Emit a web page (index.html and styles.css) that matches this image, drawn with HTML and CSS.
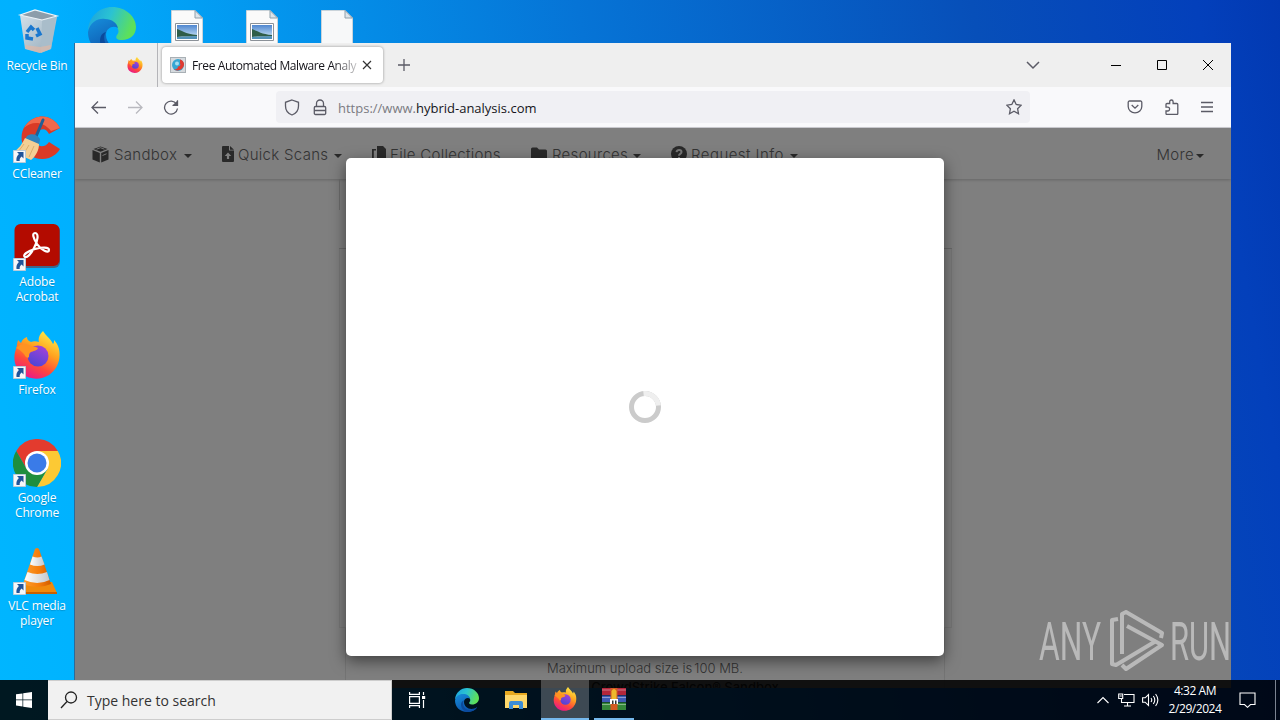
FILE: index.html
```html
<!DOCTYPE html>
<html lang="en">
<head>
  <meta charset="UTF-8" />
  <title>Desktop</title>
  <link rel="stylesheet" href="styles.css">
</head>
<body>

<!-- shared icons -->
<svg class="defs" width="0" height="0">
  <defs>
    <linearGradient id="ffOuter" x1=".8" y1="0" x2=".3" y2="1">
      <stop offset="0" stop-color="#fff14a"/><stop offset=".4" stop-color="#ffa21f"/><stop offset=".7" stop-color="#ff4a3a"/><stop offset="1" stop-color="#e8168c"/>
    </linearGradient>
    <linearGradient id="ffGlobe" x1=".8" y1="0" x2=".3" y2="1">
      <stop offset="0" stop-color="#a641d8"/><stop offset="1" stop-color="#4b45d4"/>
    </linearGradient>
    <linearGradient id="edgeGreen" x1="0" y1="0" x2="1" y2=".3">
      <stop offset="0" stop-color="#1a9fe0"/><stop offset=".5" stop-color="#2bc3d2"/><stop offset="1" stop-color="#5de05a"/>
    </linearGradient>
    <linearGradient id="edgeBlue" x1="0" y1="0" x2=".6" y2="1">
      <stop offset="0" stop-color="#168fdc"/><stop offset="1" stop-color="#0c4fa8"/>
    </linearGradient>
    <linearGradient id="binSide" x1="0" y1="0" x2="1" y2="1">
      <stop offset="0" stop-color="#d3e0e9"/><stop offset="1" stop-color="#94aab9"/>
    </linearGradient>
    <linearGradient id="cone" x1="0" y1="0" x2="1" y2="0">
      <stop offset="0" stop-color="#ffa02e"/><stop offset=".6" stop-color="#f47b0a"/><stop offset="1" stop-color="#cf5c00"/>
    </linearGradient>
    <linearGradient id="coneWhite" x1="0" y1="0" x2="1" y2="0">
      <stop offset="0" stop-color="#fff"/><stop offset="1" stop-color="#c5c8cc"/>
    </linearGradient>
    <linearGradient id="sky" x1="0" y1="0" x2="0" y2="1">
      <stop offset="0" stop-color="#4f86d0"/><stop offset="1" stop-color="#d9effa"/>
    </linearGradient>

    <symbol id="firefox" viewBox="0 0 48 48">
      <path fill="url(#ffOuter)" d="M30 0c-4 4-5 8-4 11-3-1-6-1-8 0-3-1-4-3-4-5-3 1-5 3-6 6L5 9c-1 3-1 6-2 9-4 11 0 20 6 25 8 6 19 6 27 1 9-6 12-16 10-26-1-4-3-7-5-9 0 2 0 3-1 4-2-5-7-8-10-13z"/>
      <circle cx="25" cy="25" r="10.500" fill="url(#ffGlobe)"/>
      <path fill="#ff9322" d="M3 17c4-4 8-5 13-3 3 2 6 1 9 3-1 3-5 3-7 4s-2 3-2 5c-2 2-4-1-5-3-3-3-5-5-8-6z"/>
    </symbol>
    <symbol id="edge" viewBox="0 0 48 48">
      <path fill="url(#edgeGreen)" d="M0 23C1 9 12 0 24 0c14 0 24 10 24 20 0 8-6 13-14 13-5 0-7-2-5-5 2-2 2-5 0-8C24 12 8 11 0 23z"/>
      <path fill="url(#edgeBlue)" d="M0 25c2-10 10-14 17-13 7 0 12 4 13 9-5-3-12 0-12 7 0 8 7 14 15 14 4 0 8-2 11-3-4 6-12 9-20 9C10 48 0 38 0 25z"/>
      <path fill="#0b4a9c" d="M18 25c-4 5-1 15 6 18 6 3 14 1 20-5-1 5-10 10-20 10-8-3-12-9-12-14 0-5 2-8 6-9z"/>
    </symbol>
    <symbol id="shortcut" viewBox="0 0 13 13">
      <path fill="#f6f7f9" stroke="#b9cbd9" d="M.5.5h12v12H.5z"/>
      <path fill="#20549a" d="M4 2h6.500v6.500L8.600 6.600C7 7.800 6.500 9 6.700 11H3.500C3 8 4 5.800 5.900 4z"/>
    </symbol>
    <symbol id="picture" viewBox="0 0 32 34">
      <path fill="#fafafa" stroke="#c9d3da" d="M.5.5H24l7.500 7.500V34H.5z"/>
      <path fill="#dde4ea" stroke="#8fa0ab" d="M24 .5V8h7.500z"/>
      <path fill="#fff" stroke="#8b9198" d="M4.500 13.500h23v17h-23z"/>
      <path fill="url(#sky)" d="M6 15h20v14H6z"/>
      <path fill="#2f5d49" d="M6 19c4 1 8 5 20 6v1c-7 1-14 0-20 1z"/>
      <path fill="#5291b8" d="M6 27l20-1v3H6z"/>
    </symbol>
  </defs>
</svg>

<div class="desktop">

  <div class="icon-column">
    <div class="shortcut">
      <svg width="48" height="48" viewBox="0 0 48 48">
        <path fill="url(#binSide)" d="M7 8l5 34 15 4 11-4 6-32-14 2z"/>
        <path fill="#a9bdca" d="M29 13l14-3-5 32-10 4z"/>
        <path fill="#8c9daa" stroke="#eef4f8" stroke-width="1.200" d="M7 8l15-5 22 6-15 4z"/>
        <path fill="#e9b7a0" opacity=".6" d="M12 38l15 2 11-2-1 4-10 4-14-4z"/>
        <g fill="none" stroke="#1a78cf" stroke-width="3.500"><path d="M14 25l4-5 3 3M24 21l3 6-4 2M20 32l-6-1v-4"/></g>
      </svg>
      <span>Recycle Bin</span>
    </div>
    <div class="shortcut">
      <svg width="48" height="48" viewBox="0 0 48 48">
        <path fill="#d93a26" d="M47 13C42 3 31-1 22 3 12 7 7 17 9 27c3 13 15 20 27 16 5-2 9-5 11-9l-11-7c-3 5-10 6-13 1-3-5-1-11 4-13 4-2 7 0 9 4z"/>
        <path fill="#f0694c" d="M47 13C42 3 31-1 22 3c-5 2-9 6-11 10 8-7 19-7 27 3z"/>
        <path stroke="#1f5f96" stroke-width="3" stroke-linecap="round" d="M30 5l-8 19"/>
        <path fill="#2e83bd" d="M14 21c4-3 10-2 13 3l-1 6-14-6z"/>
        <path fill="#f4cf94" d="M12 23l14 6c0 6-3 12-8 16L0 37c6-3 9-8 12-14z"/>
        <path fill="none" stroke="#dcae6c" d="M11 29l-6 8M16 30l-6 10M21 31l-5 11"/>
      </svg>
      <svg class="arrow"><use href="#shortcut"/></svg>
      <span>CCleaner</span>
    </div>
    <div class="shortcut">
      <svg width="48" height="48" viewBox="0 0 48 48">
        <rect x="2" y="2" width="45" height="43" rx="6" fill="#7f1a14" opacity=".5"/>
        <rect x="1.500" y="1" width="45" height="42" rx="6" fill="#b30b00"/>
        <path fill="none" stroke="#fff" stroke-width="2.200" d="M22 10c4 0 3 8-1 15-3 6-7 10-9 9-3-2 3-6 10-8 7-2 14-2 14 1 0 4-8 0-12-6s-5-11-2-11z"/>
      </svg>
      <svg class="arrow"><use href="#shortcut"/></svg>
      <span>Adobe<br>Acrobat</span>
    </div>
    <div class="shortcut">
      <svg width="48" height="48"><use href="#firefox"/></svg>
      <svg class="arrow"><use href="#shortcut"/></svg>
      <span>Firefox</span>
    </div>
    <div class="shortcut">
      <svg width="48" height="48" viewBox="0 0 48 48">
        <path fill="#e33b2e" d="M3.200 12a24 24 0 0 1 41.600 0H24L13.600 30z"/>
        <path fill="#fcc934" d="M44.800 12A24 24 0 0 1 24 48l10.400-18L24 12z"/>
        <path fill="#1e8e3e" d="M24 48A24 24 0 0 1 3.200 12l10.400 18 10.400 6 10.400-6z"/>
        <circle cx="24" cy="24" r="12" fill="#fff"/>
        <circle cx="24" cy="24" r="9.500" fill="#3a7be8"/>
      </svg>
      <svg class="arrow"><use href="#shortcut"/></svg>
      <span>Google<br>Chrome</span>
    </div>
    <div class="shortcut">
      <svg width="48" height="48" viewBox="0 0 48 48">
        <path fill="#f08a0c" d="M9 35h30l5 11H5z"/>
        <path fill="#c96000" d="M5 45h39v2H5z"/>
        <path fill="url(#cone)" d="M22 2q2-2 4 0l12 35q-14 6-28 0z"/>
        <path fill="url(#coneWhite)" d="M19.500 9.500q5 2 9 0l3 8q-7 3-14.500 0z"/>
        <path fill="url(#coneWhite)" d="M14.500 25q10 4 19.500 0l2.500 8q-12 6-25 0z"/>
      </svg>
      <svg class="arrow"><use href="#shortcut"/></svg>
      <span>VLC media<br>player</span>
    </div>
  </div>

  <div class="icon-row">
    <svg width="48" height="48"><use href="#edge"/></svg>
    <svg width="32" height="34"><use href="#picture"/></svg>
    <svg width="32" height="34"><use href="#picture"/></svg>
    <svg width="32" height="34" viewBox="0 0 32 34">
      <path fill="#f7f8f9" stroke="#c9d3da" d="M.5.5H24l7.500 7.500V34H.5z"/>
      <path fill="#dde4ea" stroke="#8fa0ab" d="M24 .5V8h7.500z"/>
    </svg>
  </div>

  <div class="window">
    <div class="tabbar">
      <div class="pinned"><svg width="16" height="16"><use href="#firefox"/></svg></div>
      <div class="tab">
        <svg width="16" height="16" viewBox="0 0 16 16">
          <rect x=".5" y=".5" width="15" height="15" fill="#d5dade" stroke="#a9b0b5"/>
          <circle cx="8" cy="8" r="6" fill="#37a6d3"/>
          <path fill="#e03a30" d="M10 2.500c4 1 5 5 3 8s-6 4-9 2c3 0 4-2 4-3 2 0 3-2 2-3z"/>
          <circle cx="7" cy="6.500" r="2" fill="#a5dcf0"/>
        </svg>
        <span class="tab-title">Free Automated Malware Analy</span>
        <svg class="tab-close" width="10" height="10" viewBox="0 0 10 10"><path d="M1 1l8 8M9 1L1 9"/></svg>
      </div>
      <svg class="line new-tab" width="14" height="14" viewBox="0 0 14 14"><path d="M7 1v12M1 7h12"/></svg>
      <div class="window-buttons">
        <svg class="line" width="14" height="14" viewBox="0 0 14 14"><path d="M1 4l6 6 6-6"/></svg>
        <svg width="12" height="12" viewBox="0 0 12 12"><path d="M1 6.500h10"/></svg>
        <svg width="12" height="12" viewBox="0 0 12 12"><path d="M1.500 1.500h9v9h-9z"/></svg>
        <svg width="12" height="12" viewBox="0 0 12 12"><path d="M1 1l10 10M11 1L1 11"/></svg>
      </div>
    </div>

    <div class="toolbar">
      <div class="nav-buttons">
        <svg class="line" width="16" height="16" viewBox="0 0 16 16"><path d="M15 8.500H1.500M7 2.500l-6 6 6 6"/></svg>
        <svg class="line disabled" width="16" height="16" viewBox="0 0 16 16"><path d="M1 8.500h13.500M9 2.500l6 6-6 6"/></svg>
        <svg class="line" width="16" height="16" viewBox="0 0 16 16"><path d="M13.500 5A6.500 6.500 0 1 0 14.500 9.500M14.500 1.500v4.800H9.700"/><path class="solid" d="M15 1v5.800H9.200z"/></svg>
      </div>
      <div class="urlbar">
        <svg class="line" width="16" height="17" viewBox="0 0 16 17"><path d="M8 1l6.500 2.300V7c0 4.500-2.500 7.500-6.500 9C4 14.500 1.500 11.500 1.500 7V3.300z"/></svg>
        <svg class="line" width="16" height="17" viewBox="0 0 16 17"><path d="M4.500 7.500V4.500a3.500 3.500 0 0 1 7 0v3M3.500 7.500h9a1.200 1.200 0 0 1 1.200 1.200v5.600a1.200 1.200 0 0 1-1.200 1.200h-9a1.200 1.200 0 0 1-1.200-1.200V8.700a1.200 1.200 0 0 1 1.200-1.200zM2.500 11.500h11"/></svg>
        <span class="url">https://www.<b>hybrid-analysis.com</b></span>
        <svg class="line star" width="16" height="16" viewBox="0 0 16 16"><path d="M8 .9l2.200 4.600 5 .7-3.600 3.500.9 5L8 12.300l-4.500 2.400.9-5L.8 6.200l5-.7z"/></svg>
      </div>
      <div class="tools">
        <svg class="line" width="16" height="16" viewBox="0 0 16 16"><path d="M2.500 2h11A1.300 1.300 0 0 1 14.800 3.300V7.500a6.800 6.300 0 0 1-13.600 0V3.300A1.300 1.300 0 0 1 2.500 2zM4.700 6L8 9.200 11.300 6"/></svg>
        <svg class="line" width="16" height="16" viewBox="0 0 16 16"><path d="M2 8.200V5.500a1 1 0 0 1 1-1h2.700V2.700a1.700 1.700 0 0 1 3.400 0v1.800h3.700a1 1 0 0 1 1 1v9a1 1 0 0 1-1 1H3a1 1 0 0 1-1-1V12h1.700a1.800 1.800 0 0 0 0-3.800z"/></svg>
        <svg class="line" width="14" height="14" viewBox="0 0 14 14"><path d="M1 2.500h12M1 7h12M1 11.500h12"/></svg>
      </div>
    </div>

    <div class="page">
      <div class="site-nav">
        <div class="item sandbox">
          <svg width="17" height="17" viewBox="0 0 17 17"><path d="M8.500.5l7 2.500-7 2.700-7-2.700z"/><path d="M.5 4l7.300 2.900v9.600L.5 13.500zM16.500 4L9.200 6.900v9.600l7.300-3z"/><path fill="none" stroke="#777" d="M4.500 3.200l4-1.500 4 1.500M10.500 9.500l4-1.700"/></svg>
          <span>Sandbox</span><i class="caret"></i>
        </div>
        <div class="item quick">
          <svg width="12" height="16" viewBox="0 0 12 16"><path fill-rule="evenodd" d="M1 0h6v4.500h5V15a1 1 0 0 1-1 1H1a1 1 0 0 1-1-1V1a1 1 0 0 1 1-1zm7 0l4 3.700H8zM6 6.500L2.700 10h2.200v3h2.200v-3h2.200z"/></svg>
          <span>Quick Scans</span><i class="caret"></i>
        </div>
        <div class="item files">
          <svg width="14" height="16" viewBox="0 0 14 16"><path d="M5 0h6l3 3v9H5zM0 3h4v1.500H1.800v10H9V16H0z"/></svg>
          <span>File Collections</span>
        </div>
        <div class="item resources">
          <svg width="16" height="16" viewBox="0 0 16 16"><path d="M1.500 1.500H6l2 2h6.500A1.500 1.500 0 0 1 16 5v7a1.500 1.500 0 0 1-1.500 1.500h-13A1.500 1.500 0 0 1 0 12V3a1.500 1.500 0 0 1 1.500-1.500z"/></svg>
          <span>Resources</span><i class="caret"></i>
        </div>
        <div class="item request">
          <svg width="16" height="16" viewBox="0 0 16 16"><circle cx="8" cy="8" r="8"/><path fill="none" stroke="#777" stroke-width="2" d="M5.500 6.200C6 3.200 10.500 3.500 10.500 6c0 2-2.500 1.800-2.500 3.700M8 11v2"/></svg>
          <span>Request Info</span><i class="caret"></i>
        </div>
        <div class="item more"><span>More</span><i class="caret"></i></div>
      </div>

      <div class="upload">
        <div class="upload-tabs"></div>
        <div class="upload-box"></div>
        <div class="upload-foot">
          <p>Maximum upload size is<span class="limit">100 MB.</span></p>
          <p class="powered">CrowdStrike Falcon® Sandbox</p>
        </div>
      </div>

      <div class="modal">
        <svg width="32" height="32" viewBox="0 0 32 32" fill="none" stroke-width="5">
          <circle cx="16" cy="16" r="13.500" stroke="#cbcbcb"/>
          <path stroke="#efefef" d="M14.500 2.600A13.500 13.500 0 0 1 29.400 14.500"/>
        </svg>
      </div>
    </div>
  </div>

  <svg class="watermark" width="192" height="64" viewBox="0 0 192 64">
    <text x="0" y="51" textLength="62" lengthAdjust="spacingAndGlyphs">ANY</text>
    <g fill="none" stroke="#fff" stroke-width="4" stroke-linejoin="round">
      <path d="M79 10l-6 1v44l4 1 40-24"/>
      <path d="M83 45V5l4-2 36 21-1 5"/>
      <path d="M88 17l35 19-36 24-4-4"/>
    </g>
    <text x="131" y="51" textLength="61" lengthAdjust="spacingAndGlyphs">RUN</text>
  </svg>

  <div class="taskbar">
    <div class="start">
      <svg width="16" height="16" viewBox="0 0 16 16"><path fill="#fff" d="M0 2.300l6.500-.9v6.200H0zM7.200 1.300L16 0v7.600H7.200zM0 8.300h6.500v6.200L0 13.600zM7.200 8.300H16V16l-8.800-1.300z"/></svg>
    </div>
    <div class="search">
      <svg width="18" height="18" viewBox="0 0 18 18"><circle cx="11" cy="6.500" r="5.500"/><path d="M7 10.500L1 17"/></svg>
      <span>Type here to search</span>
    </div>
    <div class="apps">
      <div class="app">
        <svg width="18" height="18" viewBox="0 0 18 18" fill="none" stroke="#fff" stroke-width="1.200"><path d="M1.600 1v2.400h9.800V1M1.600 17v-2.400h9.800V17M1.600 5.600h9.800v6.800H1.600zM15.500 1v3M15.500 9v8"/><path fill="#fff" d="M14.600 5.500h2v2h-2z"/></svg>
      </div>
      <div class="app"><svg width="24" height="24"><use href="#edge"/></svg></div>
      <div class="app">
        <svg width="22" height="20" viewBox="0 0 22 20"><path fill="#e8a920" d="M0 1h8l2 2h12v6H0z"/><path fill="#ffd86b" d="M0 5h22v13H0z"/><path fill="#3c8dd6" d="M4 19v-6a2 2 0 0 1 2-2h10a2 2 0 0 1 2 2v6h-4v-4H8v4z"/></svg>
      </div>
      <div class="app active"><svg width="24" height="24"><use href="#firefox"/></svg></div>
      <div class="app open">
        <svg width="24" height="22" viewBox="0 0 24 22">
          <path fill="#b3263b" d="M0 0h24v7H0z"/><path fill="#3f59b5" d="M0 7.500h24v6.500H0z"/><path fill="#35873a" d="M0 14.500h24V22H0z"/>
          <path stroke="#ffffff" stroke-opacity=".4" d="M0 2h24M0 9.500h24M0 16.500h24"/>
          <path fill="#d35a22" d="M8.500 0h7v22h-7z"/><path fill="#eeb92e" d="M9.500 3q2.500-4 5 0v8h-5z"/><path fill="#fff" d="M8 11h8v5H8z"/><path fill="#333" d="M10 12.500h1.500V16H10zM13 12.500h1.500V16H13z"/>
        </svg>
      </div>
    </div>
    <div class="tray">
      <svg width="12" height="8" viewBox="0 0 12 8"><path d="M.5 7L6 1.500 11.500 7"/></svg>
      <svg width="17" height="14" viewBox="0 0 17 14"><path d="M6 1.500h10v8H3.500V6M.7 1h4v4.500h-4zM1.800 3h2M9.500 9.500V13M6 13h7"/></svg>
      <svg width="17" height="14" viewBox="0 0 17 14"><path d="M.6 4.800h2.600L6.500 1.500v11L3.200 9.200H.6zM9 5q1.500 2 0 4M11.300 3q3 4 0 8M13.600 1q4.500 6 0 12"/></svg>
      <div class="clock">4:32 AM<br>2/29/2024</div>
      <svg width="17" height="16" viewBox="0 0 17 16"><path d="M1 1h15v11.500h-4.500L8.500 15.300 5.500 12.500H1z"/></svg>
    </div>
  </div>
</div>

</body>
</html>
```
FILE: styles.css
```css
* {
  box-sizing: border-box;
}

body {
  margin: 0;
  font-family: "Open Sans", "Noto Sans", sans-serif;
}

svg {
  display: block;
  flex: none;
}

.defs {
  position: absolute;
}

.desktop {
  position: relative;
  width: 1280px;
  height: 720px;
  overflow: hidden;
  background: linear-gradient(80deg, #00b6ff 0%, #00b0ff 12%, #0396ee 28%, #0674d6 50%, #074fb9 78%, #0340bb 94%, #0239b2 100%);
}

/* desktop icons */

.icon-column {
  position: absolute;
  left: 0;
  top: 7px;
  width: 74px;
  display: grid;
  grid-auto-rows: 108px;
}

.shortcut {
  position: relative;
  display: flex;
  flex-direction: column;
  align-items: center;
  color: #fff;
  font-size: 12px;
  line-height: 15px;
  letter-spacing: -0.15px;
  text-align: center;
  text-shadow: 0 1px 1px rgba(0, 0, 0, 0.2);
  white-space: nowrap;
}

.shortcut span {
  margin-top: 3px;
}

.shortcut .arrow {
  position: absolute;
  left: 13px;
  top: 35px;
  width: 13px;
  height: 13px;
}

.icon-row {
  position: absolute;
  left: 88px;
  top: 7px;
  display: flex;
}

.icon-row svg + svg {
  margin: 3px 0 0 43px;
}

.icon-row svg:nth-child(2) {
  margin-left: 35px;
}

/* browser window */

.window {
  position: absolute;
  left: 74px;
  top: 43px;
  width: 1157px;
  height: 645px;
  border-left: 1px solid #2c6a98;
  overflow: hidden;
  background: #7f7f7f;
}

.line {
  fill: none;
  stroke: #5b5b66;
  stroke-width: 1.3;
}

.line .solid {
  fill: #5b5b66;
  stroke: none;
}

.tabbar {
  display: flex;
  align-items: center;
  height: 44px;
  background: #efefef;
}

.pinned {
  width: 83px;
  height: 44px;
  padding: 14px 0 0 52px;
  border-right: 1px solid #b4b4b8;
}

.tab {
  display: flex;
  align-items: center;
  width: 221px;
  height: 36px;
  margin-left: 4px;
  padding: 0 11px 0 8px;
  border-radius: 4px;
  background: #fff;
  box-shadow: 0 0 3px rgba(0, 0, 0, 0.4);
}

.tab-title {
  width: 168px;
  margin: 0 3px 0 6px;
  font-size: 12px;
  letter-spacing: -0.4px;
  white-space: nowrap;
  color: #15141a;
  -webkit-mask-image: linear-gradient(90deg, #000 140px, transparent 172px);
  mask-image: linear-gradient(90deg, #000 140px, transparent 172px);
}

.tab-close {
  fill: none;
  stroke: #333;
  stroke-width: 1.2;
}

.new-tab {
  margin-left: 14px;
}

.window-buttons {
  display: flex;
  align-items: center;
  gap: 34px;
  margin-left: auto;
  margin-right: 17px;
  fill: none;
  stroke: #000;
  stroke-width: 1;
}

.window-buttons .line {
  margin-right: 36px;
  stroke-width: 1.5;
}

.toolbar {
  display: flex;
  align-items: center;
  height: 41px;
  border-bottom: 1px solid #cfcfd4;
  background: #f9f9fb;
}

.nav-buttons {
  display: flex;
  gap: 20px;
  width: 201px;
  padding-left: 16px;
}

.disabled {
  opacity: 0.4;
}

.urlbar {
  display: flex;
  align-items: center;
  gap: 12px;
  width: 754px;
  height: 32px;
  padding: 0 8px;
  border-radius: 4px;
  background: #f0f0f4;
}

.url {
  margin: 1px 0 0 -2px;
  font-size: 13px;
  color: #7b7b82;
}

.url b {
  font-weight: 400;
  color: #15141a;
}

.star {
  margin-left: auto;
}

.tools {
  display: flex;
  align-items: center;
  gap: 21px;
  margin: 0 17px 0 auto;
}

.tools svg:first-child,
.tools svg:nth-child(2) {
  margin-right: -1px;
  margin-left: 1px;
}

/* web page under the overlay */

.page {
  position: relative;
  height: 560px;
  background: #7f7f7f;
  font-family: Inter, sans-serif;
  font-weight: 300;
  color: #333;
}

.site-nav {
  display: flex;
  align-items: center;
  gap: 30px;
  height: 51px;
  padding: 1px 27px 0 17px;
  box-shadow: 0 1px 3px rgba(0, 0, 0, 0.2);
}

.item {
  display: flex;
  align-items: center;
  gap: 5px;
  font-size: 15px;
  letter-spacing: 0.3px;
  white-space: nowrap;
}

.item svg {
  fill: #292929;
}

.item.sandbox { width: 100px; }
.item.quick { width: 120px; gap: 4px; }
.item.files { width: 129px; gap: 4px; }
.item.resources { width: 110px; }
.item.request { width: 127px; gap: 4px; }

.item.request span {
  letter-spacing: 0.45px;
}

.item.more {
  gap: 2px;
  margin-left: auto;
}

.caret {
  margin: 3px 0 0 auto;
  border: 4px solid transparent;
  border-top-color: #292929;
  border-bottom: 0;
}

.upload {
  width: 613px;
  margin-left: 264px;
}

.upload-tabs {
  height: 70px;
  border-bottom: 1px solid #6a6a6a;
}

.upload-tabs::before {
  content: "";
  display: block;
  width: 1px;
  height: 31px;
  background: #6c6c6c;
}

.upload-box {
  height: 379px;
  border: 1px solid #777;
  border-top: 0;
}

.upload-foot {
  width: 600px;
  margin-left: 6px;
  height: 70px;
  padding-top: 30px;
  border: 1px solid #747474;
  border-top: 0;
  font-size: 13px;
  line-height: 20px;
  text-align: center;
}

.upload-foot p {
  margin: 0;
}

.limit {
  margin-left: 2px;
}

.upload-foot .powered {
  margin-left: 80px;
  line-height: 18px;
  font-weight: 500;
  color: #222;
}

.modal {
  position: absolute;
  left: 271px;
  top: 30px;
  width: 598px;
  height: 498px;
  display: flex;
  align-items: center;
  justify-content: center;
  border-radius: 5px;
  background: #fff;
  box-shadow: 0 5px 15px rgba(0, 0, 0, 0.5);
}

.watermark {
  position: absolute;
  left: 1039px;
  top: 609px;
  opacity: 0.45;
  fill: #fff;
  font: 400 53px Roboto, sans-serif;
}

/* taskbar */

.taskbar {
  position: absolute;
  left: 0;
  bottom: 0;
  width: 1280px;
  height: 40px;
  display: flex;
  background: rgba(0, 0, 0, 0.87);
}

.start {
  display: flex;
  align-items: center;
  justify-content: center;
  width: 48px;
}

.search {
  display: flex;
  align-items: center;
  gap: 9px;
  width: 344px;
  padding-left: 12px;
  border: 1px solid #cdcdcd;
  border-left: 0;
  background: #f1f1f1;
  color: #333;
  font-size: 14px;
}

.search svg {
  fill: none;
  stroke: #222;
  stroke-width: 1.3;
}

.apps {
  display: flex;
  gap: 1px;
  padding-left: 2px;
}

.app {
  display: flex;
  align-items: center;
  justify-content: center;
  width: 48px;
}

.app:first-child {
  padding-right: 3px;
}

.app.active {
  border-bottom: 2px solid #76b9ed;
  background: rgba(255, 255, 255, 0.24);
}

.app.open {
  width: 40px;
  margin-left: 4px;
  border-bottom: 2px solid #76b9ed;
}

.tray {
  display: flex;
  align-items: center;
  margin: 0 4px 0 auto;
  padding-right: 19px;
  border-right: 1px solid #7b8391;
  color: #fff;
}

.tray svg {
  fill: none;
  stroke: #fff;
  stroke-width: 1.1;
}

.tray svg + svg {
  margin-left: 9px;
}

.tray svg + svg + svg {
  margin-left: 7px;
}

.clock {
  width: 68px;
  margin: 0 10px 0 2px;
  font-size: 12px;
  line-height: 18px;
  letter-spacing: -0.45px;
  text-align: center;
}
```
